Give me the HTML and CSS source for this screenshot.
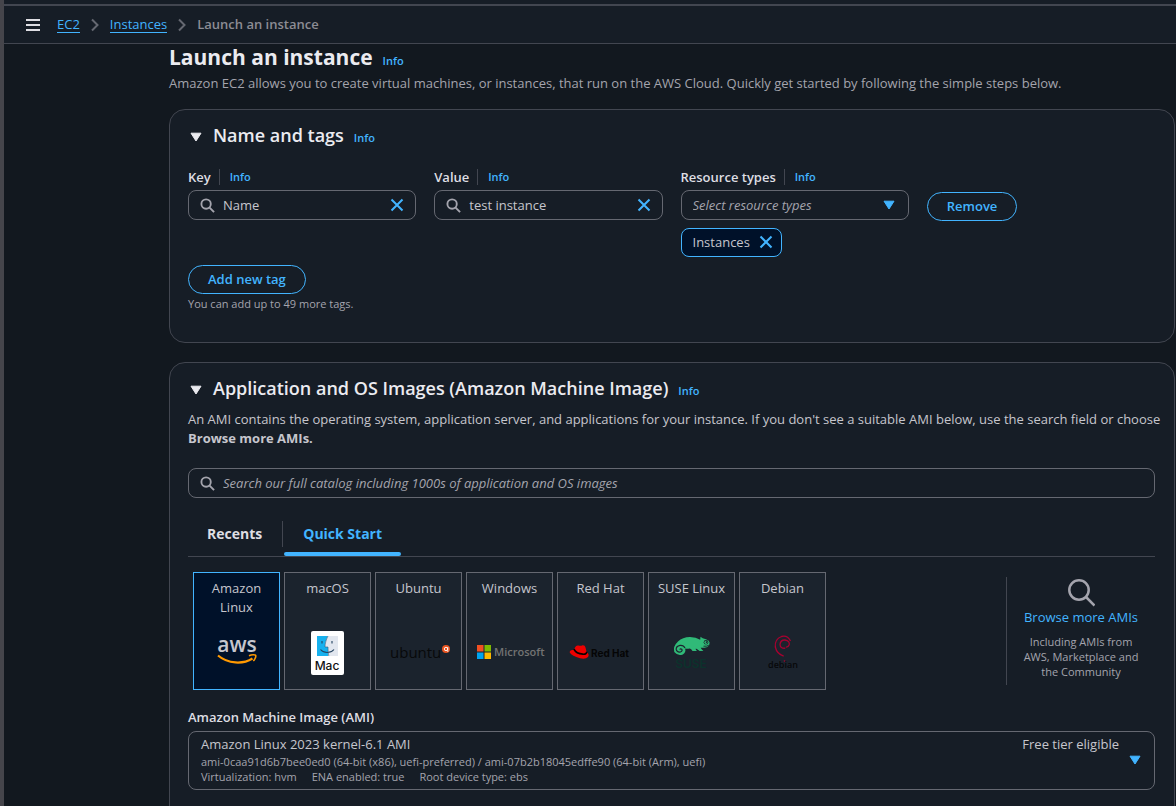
FILE: index.html
```html
<!DOCTYPE html>
<html lang="en">
<head>
<meta charset="utf-8">
<title>Launch an instance | EC2</title>
<link rel="stylesheet" href="styles.css">
</head>
<body>
<svg class="sprite" aria-hidden="true">
  <symbol id="search" viewBox="0 0 16 16"><circle cx="6.5" cy="6.5" r="5" fill="none" stroke="currentColor" stroke-width="2"/><path d="M10.2 10.2 15 15" stroke="currentColor" stroke-width="2"/></symbol>
  <symbol id="close" viewBox="0 0 14 14"><path d="M1.5 1.5 12.5 12.5M12.5 1.5 1.5 12.5" stroke="currentColor" stroke-width="2" fill="none"/></symbol>
  <symbol id="caret" viewBox="0 0 12 10"><path d="M1 1.2h10L6 9z" fill="currentColor" stroke="currentColor" stroke-linejoin="round"/></symbol>
  <symbol id="chevron" viewBox="0 0 8 14"><path d="M1 1.5 6.5 7 1 12.5" fill="none" stroke="currentColor" stroke-width="2"/></symbol>
</svg>
<div class="app">
  <div class="topbar"></div>
  <header class="crumbs">
    <button class="menu" type="button" aria-label="Open navigation"><svg width="14" height="12" viewBox="0 0 14 12"><path d="M0 1h14M0 6h14M0 11h14" stroke="currentColor" stroke-width="2"/></svg></button>
    <nav class="crumb-list" aria-label="Breadcrumbs">
      <a href="#">EC2</a>
      <svg class="chevron" width="8" height="14"><use href="#chevron"/></svg>
      <a href="#">Instances</a>
      <svg class="chevron" width="8" height="14"><use href="#chevron"/></svg>
      <span class="current">Launch an instance</span>
    </nav>
  </header>
  <main class="content">
    <div class="title-row"><h1>Launch an instance</h1><a class="info" href="#">Info</a></div>
    <p class="intro">Amazon EC2 allows you to create virtual machines, or instances, that run on the AWS Cloud. Quickly get started by following the simple steps below.</p>

    <section class="card">
      <div class="card-head"><button class="toggle" type="button" aria-label="Collapse name and tags"><svg width="12" height="10"><use href="#caret"/></svg></button><h2>Name and tags</h2><a class="info" href="#">Info</a></div>
      <div class="tag-grid">
        <div class="field">
          <div class="label-row"><label for="key">Key</label><a class="info" href="#">Info</a></div>
          <div class="box"><svg class="glass" width="15" height="15"><use href="#search"/></svg><input id="key" type="text" value="Name"><button class="clear" type="button" aria-label="Clear key"><svg width="14" height="14"><use href="#close"/></svg></button></div>
        </div>
        <div class="field">
          <div class="label-row"><label for="value">Value</label><a class="info" href="#">Info</a></div>
          <div class="box"><svg class="glass" width="15" height="15"><use href="#search"/></svg><input id="value" type="text" value="test instance"><button class="clear" type="button" aria-label="Clear value"><svg width="14" height="14"><use href="#close"/></svg></button></div>
        </div>
        <div class="field">
          <div class="label-row"><label for="types">Resource types</label><a class="info" href="#">Info</a></div>
          <div class="box select-box"><select id="types"><option>Select resource types</option></select><svg class="caret" width="12" height="10"><use href="#caret"/></svg></div>
          <div class="token">Instances<button class="clear" type="button" aria-label="Remove Instances"><svg width="14" height="14"><use href="#close"/></svg></button></div>
        </div>
        <div class="remove"><button class="pill" type="button">Remove</button></div>
      </div>
      <button class="pill add" type="button">Add new tag</button>
      <p class="hint">You can add up to 49 more tags.</p>
    </section>

    <section class="card images">
      <div class="card-head"><button class="toggle" type="button" aria-label="Collapse application and OS images"><svg width="12" height="10"><use href="#caret"/></svg></button><h2>Application and OS Images (Amazon Machine Image)</h2><a class="info" href="#">Info</a></div>
      <p class="about">An AMI contains the operating system, application server, and applications for your instance. If you don't see a suitable AMI below, use the search field or choose <strong>Browse more AMIs.</strong></p>
      <div class="box catalog"><svg class="glass" width="15" height="15"><use href="#search"/></svg><input type="search" aria-label="Search catalog" placeholder="Search our full catalog including 1000s of application and OS images"></div>
      <div class="tabs" role="tablist">
        <button class="tab" type="button" role="tab">Recents</button>
        <button class="tab active" type="button" role="tab" aria-selected="true">Quick Start</button>
      </div>
      <div class="picker">
        <div class="tiles">
          <label class="tile"><input type="radio" name="os" checked><span class="tile-name">Amazon Linux</span>
            <svg class="logo" width="42" height="30" viewBox="0 0 42 30"><text class="aws-text" x="21" y="14" text-anchor="middle">aws</text><path d="M2 17.500C12 26 27 26.500 36.500 20.500" fill="none" stroke="#ff9900" stroke-width="2.200"/><path d="M33 17.800c3-1.400 6-1.200 6.600-.500s-.300 3.700-2.300 5.700" fill="none" stroke="#ff9900" stroke-width="1.600"/></svg></label>
          <label class="tile"><input type="radio" name="os"><span class="tile-name">macOS</span>
            <svg class="logo" width="34" height="44" viewBox="0 0 34 44"><rect width="33" height="44" rx="2" fill="#fff"/><path d="M6 5h11c-2 4-2.800 7-3 11h3v9H6z" fill="#17b1ee"/><path d="M17 5h10v20H17v-9h-3c.200-4 1-7 3-11z" fill="#e2e7ef"/><path d="M11 10v2.500M21 10v2.500M9.500 18.500c3.500 4 10 4 13.500 0" fill="none" stroke="#24435f" stroke-width="1.100"/><path d="M17 5c-2 4-2.800 7-3 11h3q0 5 .8 9" fill="none" stroke="#315a79" stroke-width=".6"/><text class="mac-text" x="16" y="39" text-anchor="middle">Mac</text></svg></label>
          <label class="tile"><input type="radio" name="os"><span class="tile-name">Ubuntu</span>
            <svg class="logo" width="62" height="20" viewBox="0 0 62 20"><text class="ubuntu-text" x="2" y="15">ubuntu</text><circle cx="58" cy="6" r="4" fill="#e95420"/><circle cx="58" cy="6" r="1.700" fill="none" stroke="#fff" stroke-width=".9"/><path d="M59.800 4v5" stroke="#fff" stroke-width=".8"/></svg></label>
          <label class="tile"><input type="radio" name="os"><span class="tile-name">Windows</span>
            <svg class="logo" width="68" height="20" viewBox="0 0 68 20"><path d="M1 2h6.500v6.500H1z" fill="#f25022"/><path d="M8.500 2H15v6.500H8.500z" fill="#7fba00"/><path d="M1 9.500h6.500V16H1z" fill="#00a4ef"/><path d="M8.500 9.500H15V16H8.500z" fill="#ffb900"/><text class="ms-text" x="18" y="13">Microsoft</text></svg></label>
          <label class="tile"><input type="radio" name="os"><span class="tile-name">Red Hat</span>
            <svg class="logo" width="64" height="20" viewBox="0 0 64 20"><path d="M6 4.500Q7 2 9.500 2.500q2 .8 4-.2 2.500-.3 3 2.200l1 4.300q3.300 2.700 1.500 5.200-2.500 2.500-8 1.200Q3 13.200.7 9.500.500 6.700 5 6.700z" fill="#e00"/><path d="M4.900 6.200q2.300 4.600 9 5 3.700.3 3.900-2.500" fill="none" stroke="#0a0000" stroke-width="1.700"/><text class="rh-text" x="22" y="14">Red Hat</text></svg></label>
          <label class="tile"><input type="radio" name="os"><span class="tile-name">SUSE Linux</span>
            <svg class="logo suse" width="38" height="36" viewBox="0 0 38 36"><path d="M5 6.500Q9.500 2 17 2q6 .3 10.200 2.700l.3-3q1.700 1.800 5.500 2.500 3 1 3.600 3.300.3 2.900-2.300 4.400-3.500 1.100-6.700.8.800 1.500 2.800 3.200h-3.700q-2.200-2-3.900-2.500-.5 1 1.200 2.500h-4.500q-1.300-2.200-2.700-2.500-2.500.5-4.700.2 1.300 3.800-2.300 5.800-5.200 1.800-8.500-2.300Q-.4 11.500 5 6.500z" fill="#30ba78"/><path d="M12 13q-1.500-3-5-2.600-4 .8-3.800 4 .8 3.200 4.300 2.600 2.300-1 1.300-2.800-1.600-.9-2 .4" fill="none" stroke="#1c242e" stroke-width="1.200"/><circle cx="33" cy="7.300" r="2.300" fill="#1c242e"/><circle cx="33" cy="7.300" r="1.600" fill="#30ba78"/><circle cx="33.600" cy="7.100" r=".9" fill="#1c242e"/><path d="M30.500 11.200q3.300.5 5.300-1" stroke="#1c242e" fill="none" stroke-width=".9"/><text class="suse-text" x="18" y="33" text-anchor="middle">SUSE</text></svg></label>
          <label class="tile"><input type="radio" name="os"><span class="tile-name">Debian</span>
            <svg class="logo" width="30" height="38" viewBox="0 0 30 38"><path d="M17.300 14.200Q12.200 14.700 12 10.500q.5-4.700 5-4.500 5 .8 4.200 4.700-1 2.600-3.300 2.400M22.500 7Q19.500 1 13.500 2.500 6.500 5.300 7.300 13q1.500 6.800 8.400 9.200" fill="none" stroke="#a80030" stroke-width="1.300"/><text class="debian-text" x="15" y="34" text-anchor="middle">debian</text><circle cx="16.500" cy="27" r=".8" fill="#a80030"/></svg></label>
        </div>
        <div class="browse">
          <svg class="big-glass" width="28" height="28" viewBox="0 0 28 28"><circle cx="12" cy="11" r="9.700" fill="none" stroke="currentColor" stroke-width="2.500"/><path d="M19 18 27.500 26.500" stroke="currentColor" stroke-width="2.500"/></svg>
          <a href="#">Browse more AMIs</a>
          <p>Including AMIs from AWS, Marketplace and the Community</p>
        </div>
      </div>
      <div class="ami-label" id="ami-label">Amazon Machine Image (AMI)</div>
      <button class="ami" type="button" aria-haspopup="listbox" aria-labelledby="ami-label">
        <span class="ami-text">
          <span class="ami-name"><span>Amazon Linux 2023 kernel-6.1 AMI</span><span>Free tier eligible</span></span>
          <span class="ami-line">ami-0caa91d6b7bee0ed0 (64-bit (x86), uefi-preferred) / ami-07b2b18045edffe90 (64-bit (Arm), uefi)</span>
          <span class="ami-line facts"><span>Virtualization: hvm</span><span>ENA enabled: true</span><span>Root device type: ebs</span></span>
        </span>
        <svg width="12" height="10"><use href="#caret"/></svg>
      </button>
    </section>
  </main>
</div>
</body>
</html>
```
FILE: styles.css
```css
* { box-sizing: border-box; }
body {
  margin: 0;
  background: #12181f;
  color: #c6c6cd;
  font: 13px/19px "Open Sans", "Noto Sans", sans-serif;
}
h1, h2, p { margin: 0; }
a { color: #42b4ff; text-decoration: none; }
button, input, select { font: inherit; color: inherit; }
button { padding: 0; border: 0; background: none; cursor: pointer; }
svg { flex: none; }
.sprite { position: absolute; width: 0; height: 0; }

.app {
  display: flex;
  flex-direction: column;
  height: 100vh;
  overflow: hidden;
  border-left: 4px solid #45454b;
}
.topbar { flex: none; height: 6px; background: #161d26; border-bottom: 2px solid #424650; }
.crumbs {
  flex: none;
  display: flex;
  align-items: center;
  gap: 17px;
  height: 38px;
  padding-left: 22px;
  background: #161d26;
  border-bottom: 1px solid #424650;
}
.menu { display: flex; color: #dedee3; }
.crumb-list { display: flex; align-items: center; gap: 11px; }
.crumb-list a { line-height: 16px; border-bottom: 1px solid #42b4ff; }
.chevron { color: #656871; }
.current { color: #8c8c94; font-weight: 600; }

.content { padding: 0 1px 0 165px; }
.title-row, .card-head { display: flex; align-items: baseline; gap: 10px; }
h1 { color: #ebebf0; font-size: 21px; line-height: 26px; font-weight: 700; }
h2 { color: #ebebf0; font-size: 18px; line-height: 24px; font-weight: 600; }
.info { font-size: 11px; line-height: 16px; font-weight: 600; }
.intro { padding-top: 4px; line-height: 18px; color: #a4a4ad; }

.card {
  margin-top: 17px;
  padding: 13px 19px 31px 18px;
  border: 1px solid #424650;
  border-radius: 16px;
  background: #161d26;
}
.card.images { margin-top: 19px; }
.toggle { margin: 0 1px 0 2px; color: #ebebf0; }
.tag-grid { display: grid; grid-template-columns: repeat(4, minmax(0, 1fr)); gap: 18px; margin-top: 21px; }
.label-row { display: flex; align-items: center; height: 18px; margin-bottom: 4px; }
.label-row label, .ami-label { color: #dedee3; font-weight: 600; }
.label-row .info { margin-left: 8px; padding-left: 10px; border-left: 1px solid #424650; }
.box {
  display: flex;
  align-items: center;
  height: 30px;
  padding: 0 11px;
  border: 1px solid #656871;
  border-radius: 8px;
}
.box input, .box select {
  flex: 1;
  min-width: 0;
  height: 28px;
  padding: 0;
  border: 0;
  outline: 0;
  background: none;
  appearance: none;
}
.glass { margin-right: 8px; color: #a4a4ad; }
.clear { display: flex; color: #42b4ff; }
.box select { color: #a4a4ad; font-style: italic; }
.caret { margin-right: 2px; color: #42b4ff; }
.token {
  display: flex;
  align-items: center;
  gap: 9px;
  width: fit-content;
  height: 29px;
  margin-top: 8px;
  padding: 0 8px 1px 11px;
  border: 1px solid #42b4ff;
  border-radius: 8px;
  background: #001129;
}
.remove { padding-top: 24px; }
.pill {
  height: 29px;
  padding: 0 19px 1px;
  border: 1px solid #42b4ff;
  border-radius: 15px;
  color: #42b4ff;
  font-weight: 600;
}
.add { display: block; margin-top: 8px; }
.hint { padding-top: 2px; color: #a4a4ad; font-size: 11px; line-height: 15px; }

.about { margin: 10px -16px 0 0; }
.about strong { font-weight: 700; }
.catalog { margin-top: 20px; }
.catalog input::placeholder { color: #a4a4ad; opacity: 1; font-style: italic; }
.tabs { display: flex; margin-top: 16px; border-bottom: 1px solid #424650; }
.tab {
  position: relative;
  height: 42px;
  padding: 0 19px 4px;
  color: #dedee3;
  font-size: 14px;
  font-weight: 700;
}
.tab.active { margin-left: 3px; color: #42b4ff; }
.tab.active::before { content: ""; position: absolute; left: -2px; top: 7px; height: 26px; border-left: 1px solid #424650; }
.tab.active::after { content: ""; position: absolute; left: 0; right: 0; bottom: 0; height: 4px; border-radius: 2px; background: #42b4ff; }

.picker { display: flex; justify-content: space-between; margin-top: 15px; padding-left: 5px; }
.tiles { display: flex; gap: 4px; }
.tile {
  position: relative;
  display: flex;
  flex-direction: column;
  align-items: center;
  width: 87px;
  height: 118px;
  padding: 6px 8px 0;
  border: 1px solid #656871;
  background: #1b232d;
  text-align: center;
}
.tile:nth-child(6) { padding: 6px 0 0; }
.tile:has(input:checked) { border-color: #42b4ff; background: #001129; }
.tile input { position: absolute; opacity: 0; }
.tile-name { flex: none; height: 38px; }
.logo { margin: auto 0; overflow: visible; }
.aws-text { font: 600 21px "Open Sans", sans-serif; fill: #c6c6cd; }
.mac-text { font: 500 12px "Inter", sans-serif; fill: #111; }
.ubuntu-text { font: 15px "Open Sans", sans-serif; fill: #08090a; }
.ms-text { font: 600 11px "Open Sans", sans-serif; fill: #737373; }
.rh-text { font: 700 10px "Inter", sans-serif; fill: #050505; }
.suse-text { font: 600 12px "Inter", sans-serif; fill: #0c322c; }
.debian-text { font: 600 9px "Open Sans", sans-serif; fill: #07080a; }

.browse {
  align-self: center;
  display: flex;
  flex-direction: column;
  align-items: center;
  width: 149px;
  height: 108px;
  padding: 2px 12px 0;
  border-left: 1px solid #424650;
  text-align: center;
}
.browse a { white-space: nowrap; }
.big-glass { margin-bottom: 1px; color: #a4a4ad; }
.browse p { padding-top: 7px; color: #a4a4ad; font-size: 11px; line-height: 15px; }

.ami-label { margin-top: 18px; }
.ami {
  display: flex;
  align-items: center;
  width: 100%;
  margin-top: 4px;
  padding: 3px 13px 5px 12px;
  border: 1px solid #656871;
  border-radius: 8px;
  text-align: left;
}
.ami > svg { color: #42b4ff; }
.ami-text { flex: 1; display: flex; flex-direction: column; }
.ami-name { display: flex; justify-content: space-between; padding-right: 10px; line-height: 19px; }
.ami-line { color: #a4a4ad; font-size: 11px; line-height: 15px; }
.facts { display: flex; gap: 15px; }
```
